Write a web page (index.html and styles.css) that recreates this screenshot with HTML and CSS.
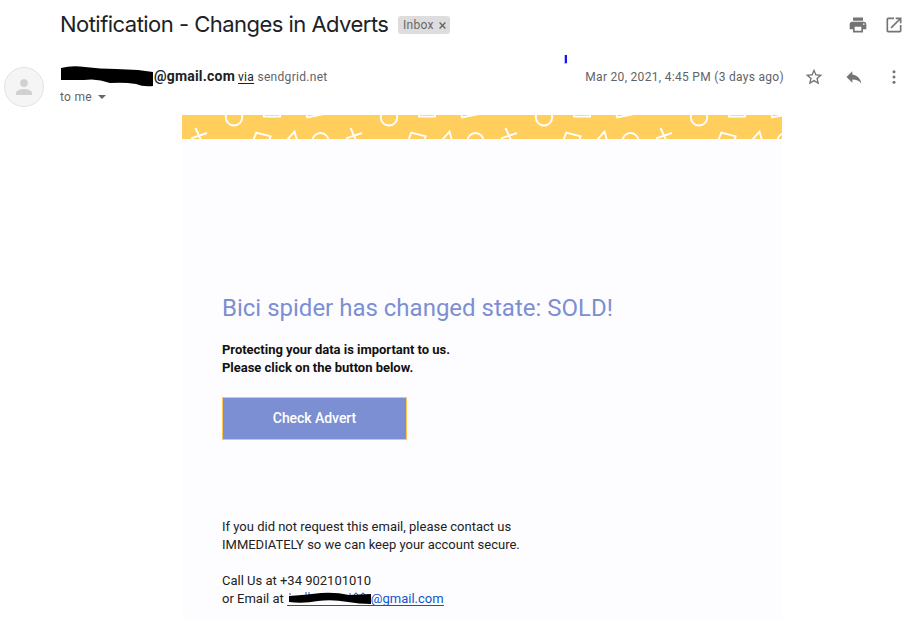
FILE: index.html
```html
<!DOCTYPE html>
<html lang="en">
<head>
<meta charset="utf-8">
<title>Notification - Changes in Adverts</title>
<link rel="stylesheet" href="styles.css">
</head>
<body>
<header class="subject">
  <h1>Notification - Changes in Adverts</h1>
  <span class="label"><span>Inbox</span><svg width="7" height="7" viewBox="0 0 7 7"><path d="M.6.6l5.8 5.8M6.4.6L.6 6.4" stroke="#666" stroke-width="1.4"/></svg></span>
  <div class="actions">
    <svg width="20" height="20" viewBox="0 0 24 24"><path d="M19 8H5c-1.66 0-3 1.34-3 3v6h4v4h12v-4h4v-6c0-1.66-1.34-3-3-3zm-3 11H8v-5h8v5zm3-7c-.55 0-1-.45-1-1s.45-1 1-1 1 .45 1 1-.45 1-1 1zm-1-9H6v4h12V3z"/></svg>
    <svg width="20" height="20" viewBox="0 0 24 24"><path d="M19 19H5V5h7V3H5c-1.11 0-2 .9-2 2v14c0 1.1.89 2 2 2h14c1.1 0 2-.9 2-2v-7h-2v7zM14 3v2h3.59l-9.83 9.83 1.41 1.41L19 6.41V10h2V3h-7z"/></svg>
  </div>
</header>
<section class="sender">
  <div class="avatar"><svg width="24" height="24" viewBox="0 0 24 24"><path d="M12 12c2.21 0 4-1.79 4-4s-1.79-4-4-4-4 1.79-4 4 1.79 4 4 4zm0 2c-2.67 0-8 1.34-8 4v2h16v-2c0-2.66-5.33-4-8-4z"/></svg></div>
  <div class="who">
    <div class="from">
      <svg class="scribble" width="94" height="22" viewBox="0 0 94 22"><path d="M1 3Q12 0 25 2Q40 4 56 4L78 5L93 7V21Q83 22 76 19Q64 17 50 18Q37 13 24 15H1Z"/></svg>
      <b>@gmail.com</b><span class="via"><u>via</u> sendgrid.net</span>
    </div>
    <div class="to"><span>to me</span><i class="caret"></i></div>
  </div>
  <div class="meta">
    <span class="date">Mar 20, 2021, 4:45 PM (3 days ago)</span>
    <svg width="20" height="20" viewBox="0 0 24 24"><path d="M22 9.24l-7.19-.62L12 2 9.19 8.63 2 9.24l5.46 4.73L5.82 21 12 17.27 18.18 21l-1.63-7.03L22 9.24zM12 15.4l-3.76 2.27 1-4.28-3.32-2.88 4.38-.38L12 6.1l1.71 4.04 4.38.38-3.32 2.88 1 4.28L12 15.4z"/></svg>
    <svg width="20" height="20" viewBox="0 0 24 24"><path d="M10 9V5l-7 7 7 7v-4.1c5 0 8.5 1.6 11 5.1-1-5-4-10-11-11z"/></svg>
    <svg width="20" height="20" viewBox="0 0 20 20"><circle cx="10" cy="4.8" r="1.5"/><circle cx="10" cy="10" r="1.5"/><circle cx="10" cy="15.2" r="1.5"/></svg>
  </div>
  <i class="tick"></i>
</section>
<main class="mail">
  <svg class="banner" width="600" height="24" viewBox="0 0 600 24">
    <defs><pattern id="shapes" width="155" height="24" patternUnits="userSpaceOnUse">
      <g fill="none" stroke="#fff" stroke-width="1.9">
        <path d="M13.5 13L19.5 26M9 23.3L25 18"/>
        <circle cx="52" cy="2.3" r="8.2"/>
        <path d="M82 -2V1.6H98V-2"/>
        <path d="M124 -2L125.2 2.4L142 -1"/>
        <path d="M71 26L74.3 17.7L88.7 21.3L87 26"/>
        <path d="M105 25L112.5 16.6L115.2 26"/>
        <circle cx="138.5" cy="26" r="8"/>
      </g>
    </pattern></defs>
    <rect width="600" height="24" fill="#ffce5c"/>
    <rect width="600" height="24" fill="url(#shapes)"/>
  </svg>
  <div class="content">
    <h2>Bici spider has changed state: SOLD!</h2>
    <p class="lead">Protecting your data is important to us.<br>Please click on the button below.</p>
    <a class="button">Check Advert</a>
    <p class="note">If you did not request this email, please contact us<br>IMMEDIATELY so we can keep your account secure.</p>
    <p class="contact">Call Us at +34 902101010</p>
    <div class="email"><span>or Email at</span><a><svg class="scribble" width="84" height="16" viewBox="0 0 84 16"><path d="M3 3v2M19 2v4M22 2v4M63 3v4M67 5q2-4 4 0M74 5q2-4 4 0" stroke="#15c" fill="none"/><path d="M2 6Q18 5 34 3Q49 2 62 5L84 4V14Q72 14 61 12Q45 9 31 11Q16 14 2 12Z"/></svg><span>@gmail.com</span></a></div>
  </div>
</main>
</body>
</html>
```
FILE: styles.css
```css
* { box-sizing: border-box; }
body { margin: 0; height: 619px; overflow: hidden; background: #fff; font-family: Roboto, sans-serif; color: #202124; }
h1, h2, p { margin: 0; font-weight: 400; }
svg { display: block; flex: none; fill: #747474; }
.subject { display: flex; align-items: center; height: 50px; padding: 0 5px 0 60px; }
h1 { width: 328px; padding-bottom: 2px; font: 400 22px/28px Inter, sans-serif; letter-spacing: -0.53px; white-space: nowrap; }
.label { display: flex; align-items: center; gap: 6px; width: 52px; height: 18px; margin-left: 10px; padding-left: 5px; border-radius: 3px; background: #ddd; color: #666; font-size: 12px; letter-spacing: .3px; }
.label svg { margin-left: -1px; }
.actions { display: flex; gap: 16px; margin-left: auto; }
.sender { position: relative; display: flex; height: 65px; padding: 17px 5px 0 4px; }
.avatar { display: flex; align-items: center; justify-content: center; width: 40px; height: 40px; border: 1px solid #e2e2e2; border-radius: 50%; background: #f5f5f5; }
.avatar svg { fill: #d1d1d1; width: 24px; height: 24px; }
.who { margin-left: 16px; }
.from { display: flex; align-items: center; height: 20px; margin-top: -1px; margin-bottom: 1px; font-size: 12px; letter-spacing: .3px; color: #5f6368; }
.from b { width: 81px; font-size: 14px; font-weight: 700; letter-spacing: .2px; color: #202124; }
.via { margin: 1px 0 0 3px; }
.via u { color: #222; text-underline-offset: 2px; }
.scribble { fill: #000; }
.to { display: flex; align-items: center; gap: 6px; height: 20px; font-size: 12px; letter-spacing: .3px; color: #5f6368; }
.caret { border: 4px solid transparent; border-top-color: #666; border-bottom: 0; }
.meta { display: flex; align-items: center; gap: 20px; height: 20px; margin-left: auto; font-size: 12px; letter-spacing: .3px; color: #5f6368; }
.tick { position: absolute; left: 564px; top: 5px; width: 3px; height: 9px; background: #1414ff; border: solid #bcbcff; border-width: 0 0 1px 1px; }
.mail { width: 600px; height: 504px; margin-left: 182px; background: #fdfdff; }
.content { padding: 153px 40px 0; }
h2 { font-size: 24px; line-height: 32px; color: #7c8fd3; white-space: nowrap; }
.lead { margin-top: 17px; font-size: 13px; line-height: 18px; font-weight: 700; color: #111; letter-spacing: -.02px; }
.button { display: flex; align-items: center; justify-content: center; width: 185px; height: 43px; margin-top: 20px; padding-bottom: 2px; border: 1px solid #ffc54d; background: #7c8fd3; color: #fff; font-size: 14px; font-weight: 500; letter-spacing: -.05px; }
.note, .contact, .email { font-size: 13px; line-height: 18px; color: #222; }
.note { margin-top: 78px; }
.contact { margin-top: 18px; }
.email { display: flex; }
.email a { display: flex; margin-left: 3px; height: 16px; border-bottom: 1px solid #15c; color: #15c; }
```
